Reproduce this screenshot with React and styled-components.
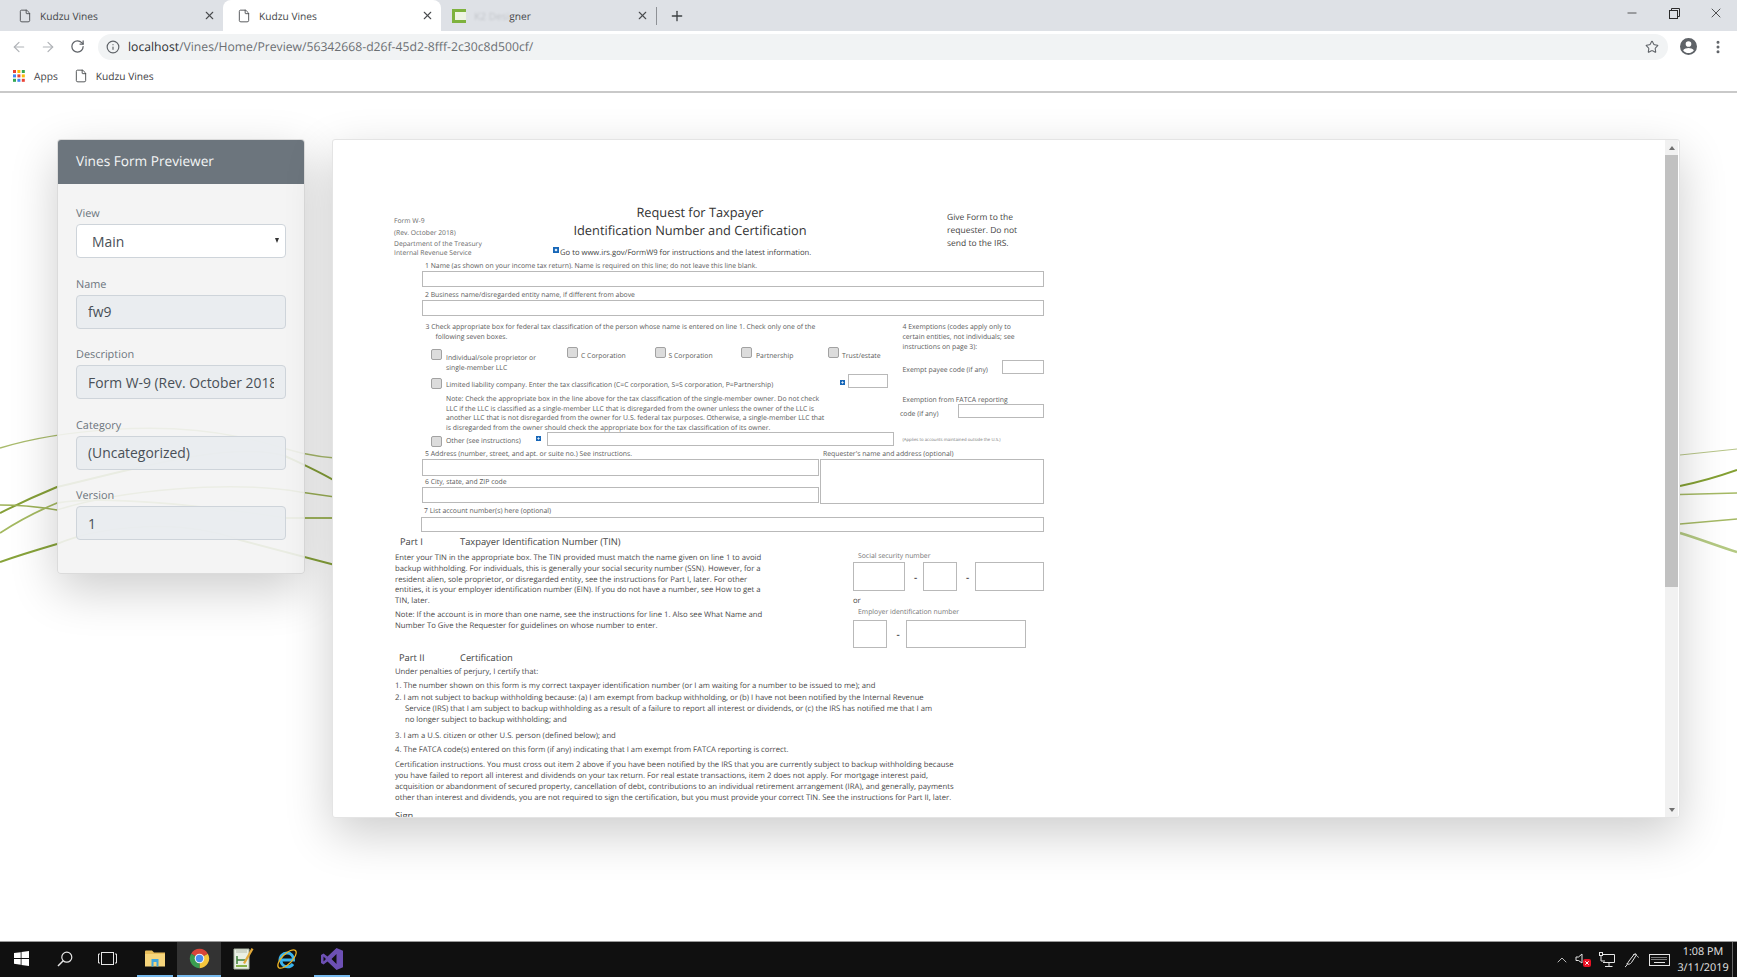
import React from "react";
import styled, { createGlobalStyle } from "styled-components";
import {
  ArrowLeft,
  ArrowRight,
  ChevronUp,
  EllipsisVertical,
  File,
  Info,
  Minus,
  Plus,
  RotateCw,
  Star,
  X,
} from "lucide-react";

const GlobalStyle = createGlobalStyle`
  html, body {
    margin: 0;
    padding: 0;
    height: 100%;
    overflow: hidden;
    background: #fff;
    font-family: "Open Sans", "Liberation Sans", sans-serif;
    text-rendering: geometricPrecision;
  }
  * { box-sizing: border-box; }
`;

const Screen = styled.div`
  width: 1737px;
  height: 977px;
  display: flex;
  flex-direction: column;
  overflow: hidden;
`;

/* browser chrome */
const TabStrip = styled.div`
  height: 31px;
  background: #dee1e6;
  display: flex;
  align-items: stretch;
`;

const Tab = styled.div`
  width: ${(p) => p.$width}px;
  display: flex;
  align-items: center;
  padding-left: ${(p) => p.$pad}px;
  gap: 8px;
  color: #45474a;
  font-size: 10.2px;
  background: ${(p) => (p.$active ? "#fff" : "transparent")};
  border-radius: 8px 8px 0 0;
`;

const TabTitle = styled.span`
  flex: 1;
`;

const TabClose = styled(X)`
  margin-right: 7px;
  color: #4a4c4f;
`;

const Smudged = styled.span`
  opacity: 0.18;
  filter: blur(1px);
`;

const FaviconK2 = styled.span`
  width: 14px;
  height: 14px;
  margin-left: 1px;
  border: 3px solid #7eb23d;
  border-right: 0;
  background: #eef4e4;
`;

const TabDivider = styled.span`
  width: 1px;
  height: 18px;
  align-self: center;
  background: #8e9196;
`;

const NewTab = styled.button`
  width: 40px;
  border: 0;
  padding: 0;
  background: none;
  display: flex;
  align-items: center;
  justify-content: center;
  color: #3c4043;
`;

const WindowControls = styled.div`
  margin-left: auto;
  display: flex;
  align-items: center;
  color: #2b2b2b;
  padding-bottom: 5px;
`;

const WindowButton = styled.span`
  width: 42px;
  display: flex;
  justify-content: center;
`;

const Toolbar = styled.div`
  height: 31px;
  display: flex;
  align-items: center;
  padding: 0 11px 0 4px;
  color: #5f6368;
`;

const NavButton = styled.span`
  width: 29.5px;
  display: flex;
  justify-content: center;
  color: ${(p) => (p.$off ? "#b0b3b7" : "#5f6368")};
`;

const AddressBar = styled.div`
  width: 1570px;
  height: 26px;
  margin-left: 5.5px;
  border-radius: 13px;
  background: #f1f3f4;
  display: flex;
  align-items: center;
  padding: 0 9px 0 8px;
`;

const Url = styled.span`
  margin-left: 8px;
  flex: 1;
  font-size: 12.2px;
  color: #6b6f73;
`;

const UrlHost = styled.span`
  color: #2f3235;
`;

const ToolbarIcons = styled.div`
  display: flex;
  align-items: center;
  margin-left: 12px;
  gap: 13px;
`;

const BookmarkBar = styled.div`
  height: 31px;
  display: flex;
  align-items: center;
  border-bottom: 2px solid #c9c9c9;
  padding: 0 0 1px 13px;
  font-size: 10.2px;
  color: #3f4245;
`;

const Bookmark = styled.span`
  display: flex;
  align-items: center;
  gap: ${(p) => p.$gap}px;
  margin-right: ${(p) => p.$after || 15}px;
`;

/* page */
const Main = styled.main`
  position: relative;
  flex: 1;
  display: flex;
  align-items: flex-start;
  gap: 27px;
  padding: 46px 0 0 57px;
  background: #fff;
  overflow: hidden;
`;

const Vines = styled.svg`
  position: absolute;
  left: 0;
  top: 0;
  width: 1737px;
  height: 848px;
`;

const Card = styled.section`
  position: relative;
  width: 248px;
  height: 435px;
  border: 1px solid rgba(0, 0, 0, 0.1);
  border-radius: 4px;
  background: rgba(243, 243, 243, 0.91);
  box-shadow: 0 16px 48px rgba(0, 0, 0, 0.2);
  overflow: hidden;
`;

const CardHeader = styled.h2`
  margin: 0;
  height: 44px;
  display: flex;
  align-items: center;
  padding: 0 0 1px 18px;
  background: #6c757d;
  color: #f4f5f6;
  font-size: 13.66px;
  font-weight: 400;
`;

const CardBody = styled.div`
  padding: 21px 18px 0 18px;
  display: flex;
  flex-direction: column;
  gap: 17.5px;
`;

const Field = styled.label`
  display: block;
`;

const FieldName = styled.span`
  display: block;
  height: 19px;
  line-height: 18px;
  color: #6c757d;
  font-size: 10.9px;
`;

const SelectWrap = styled.div`
  position: relative;
`;

const Select = styled.select`
  display: block;
  width: 100%;
  height: 34px;
  appearance: none;
  border: 1px solid #ced4da;
  border-radius: 4px;
  background: #fff;
  color: #495057;
  font: 400 13.9px "Open Sans", sans-serif;
  padding: 0 0 0 15px;
`;

const SelectArrow = styled.span`
  position: absolute;
  right: 7px;
  top: 14px;
  width: 0;
  height: 0;
  border-left: 2.5px solid transparent;
  border-right: 2.5px solid transparent;
  border-top: 5px solid #333;
`;

const TextInput = styled.input`
  display: block;
  width: 100%;
  height: 34px;
  border: 1px solid #ced4da;
  border-radius: 4px;
  background: rgba(233, 236, 239, 0.9);
  color: #495057;
  font: 400 13.9px "Open Sans", sans-serif;
  padding: 0 11px;
`;

const Frame = styled.section`
  position: relative;
  width: 1348px;
  height: 679px;
  display: flex;
  border: 1px solid #e4e4e4;
  border-radius: 3px;
  background: #fff;
  box-shadow: 0 16px 48px rgba(0, 0, 0, 0.2);
  overflow: hidden;
`;

const Sheet = styled.div`
  flex: 1;
  height: 100%;
  overflow: hidden;
  padding: 63px 0 0 61px;
`;

const Scrollbar = styled.div`
  width: 13px;
  margin-right: 1px;
  background: #f1f1f1;
  display: flex;
  flex-direction: column;
  align-items: center;
`;

const ScrollArrow = styled.span`
  height: 15px;
  display: flex;
  align-items: center;
  &::before {
    content: "";
    border-left: 3px solid transparent;
    border-right: 3px solid transparent;
    ${(p) => (p.$down ? "border-top" : "border-bottom")}: 4px solid #707070;
  }
`;

const ScrollThumb = styled.span`
  width: 100%;
  height: 432px;
  background: #c1c1c1;
`;

const ScrollTrack = styled.span`
  flex: 1;
`;

/* the W-9 */
const Form = styled.div`
  width: 650px;
  color: #5a5a5a;
  font-size: 6.85px;
`;

const Header = styled.header`
  display: flex;
  height: 56px;
`;

const HeaderLeft = styled.div`
  width: 106px;
  padding-top: 12px;
  font-size: 6.75px;
  color: #6a6a6a;
`;

const HeaderLine = styled.div`
  line-height: ${(p) => p.$h}px;
`;

const HeaderCenter = styled.div`
  width: 400px;
  text-align: center;
  color: #333;
`;

const Title = styled.h1`
  margin: 0;
  padding-right: ${(p) => p.$shift || 0}px;
  font-size: 12.8px;
  font-weight: 400;
  line-height: 18px;
`;

const GoTo = styled.div`
  margin-top: 8px;
  display: flex;
  padding-left: 53px;
  font-size: 7.67px;
  line-height: 12px;
  color: #444;
`;

const BlueMark = styled.span`
  flex: none;
  width: ${(p) => p.$size || 5}px;
  height: ${(p) => p.$size || 5}px;
  margin-top: ${(p) => p.$top || 0}px;
  margin-right: ${(p) => p.$gap || 0}px;
  background: radial-gradient(circle, #dceaf8 0 22%, #1867b8 40%);
`;

const HeaderRight = styled.div`
  margin-left: 47px;
  padding-top: 8px;
  font-size: 8.5px;
  line-height: 13px;
  color: #444;
`;

const Lines = styled.div`
  padding-left: 28px;
`;

const LineLabel = styled.div`
  height: ${(p) => p.$h || 12}px;
  margin-top: ${(p) => p.$top || 0}px;
  line-height: ${(p) => (p.$h || 12) + 3}px;
  padding-left: ${(p) => p.$pad ?? 3}px;
  white-space: nowrap;
`;

const Box = styled.div`
  width: ${(p) => (p.$w ? `${p.$w}px` : "100%")};
  height: ${(p) => p.$h}px;
  margin-left: ${(p) => p.$shift || 0}px;
  flex: none;
  border: 1px solid #b9b9b9;
  background: #fff;
`;

const Classification = styled.div`
  display: flex;
  margin-left: -28px;
  padding-left: 31.5px;
  padding-top: 7px;
  height: 131px;
`;

const ClassLeft = styled.div`
  width: 477px;
`;

const WrapText = styled.div`
  line-height: ${(p) => p.$lh || 10}px;
  padding-left: ${(p) => p.$pad || 0}px;
  margin-top: ${(p) => p.$top || 0}px;
  white-space: nowrap;
`;

const Hanging = styled.div`
  padding-left: 10px;
  margin-top: -0.5px;
`;

const TaxTypes = styled.div`
  display: flex;
  height: 27px;
  margin-top: 2.5px;
  padding-left: 5.5px;
`;

const TaxType = styled.div`
  width: ${(p) => p.$w}px;
  display: flex;
  gap: ${(p) => p.$gap || 3}px;
  line-height: 9.5px;
`;

const Check = styled.span`
  flex: none;
  width: 11px;
  height: 11px;
  margin-top: ${(p) => p.$top || 0}px;
  border: 1px solid #a2a2a2;
  border-radius: 2px;
  background: #dcdcdc;
`;

const CheckText = styled.span`
  padding-top: ${(p) => p.$top || 0}px;
  line-height: ${(p) => p.$lh || 10}px;
  white-space: nowrap;
`;

const LlcRow = styled.div`
  display: flex;
  height: 15px;
  margin-top: 2px;
  padding-left: 5.5px;
`;

const RowText = styled(CheckText)`
  width: ${(p) => p.$w}px;
  margin-left: 4px;
`;

const Note = styled.div`
  margin-top: 6px;
  padding-left: 20.5px;
  line-height: 9.65px;
  white-space: nowrap;
`;

const OtherRow = styled(LlcRow)`
  margin-top: -2px;
`;

const ClassRight = styled.div`
  width: 141px;
  flex: none;
`;

const ExemptRow = styled.div`
  display: flex;
  justify-content: space-between;
  height: 14px;
  margin-top: 6.5px;
  line-height: 22px;
`;

const FatcaRow = styled.div`
  display: flex;
  justify-content: space-between;
  height: 14px;
  margin: -2px 0 0 -2.5px;
  line-height: 22px;
`;

const Tiny = styled.div`
  margin-top: 17px;
  font-size: 4.3px;
  line-height: 10px;
  color: #777;
  white-space: nowrap;
`;

const AddressRow = styled.div`
  display: flex;
  gap: 1px;
`;

const AddressLeft = styled.div`
  width: 397px;
`;

const AddressRight = styled.div`
  flex: 1;
`;

const PartHeading = styled.div`
  display: flex;
  height: 16px;
  margin-top: ${(p) => p.$top}px;
  padding-left: ${(p) => p.$pad}px;
  line-height: 16px;
  font-size: 9.33px;
  color: #444;
`;

const PartNumber = styled.span`
  width: ${(p) => p.$w}px;
`;

const TinSection = styled.div`
  display: flex;
  height: 99px;
  padding-left: 1px;
`;

const TinText = styled.div`
  width: 458px;
  padding-top: 3px;
  font-size: 7.72px;
  line-height: 10.75px;
  color: #4a4a4a;
  white-space: nowrap;
`;

const TinNote = styled.div`
  margin-top: 3px;
`;

const TinBoxes = styled.div`
  flex: 1;
  width: 190px;
`;

const TinLabel = styled.div`
  height: 10px;
  line-height: ${(p) => p.$lh}px;
  padding-left: 5px;
  color: #777;
`;

const DigitRow = styled.div`
  display: flex;
  align-items: center;
  margin-top: ${(p) => p.$top}px;
`;

const Dash = styled.span`
  width: ${(p) => p.$w}px;
  padding-left: 3px;
  text-align: center;
  font-size: 10px;
  font-weight: 600;
  color: #444;
`;

const Or = styled.div`
  margin-top: 5px;
  height: 11px;
  line-height: 10px;
  font-size: 7.7px;
  color: #444;
`;

const Cert = styled.div`
  padding-left: 1px;
  font-size: 7.71px;
  color: #4a4a4a;
  white-space: nowrap;
`;

const CertLine = styled.div`
  line-height: ${(p) => p.$lh || 12}px;
  margin-top: ${(p) => p.$top || 0}px;
  padding-left: ${(p) => p.$pad || 0}px;
`;

const SignRow = styled.div`
  display: flex;
  margin-top: 5px;
  line-height: 14px;
  font-size: 9.33px;
  color: #444;
`;

const SignLabel = styled.span`
  width: 50px;
`;

const SignHint = styled.span`
  font-size: 5px;
  padding-top: 7px;
`;

/* taskbar */
const Taskbar = styled.footer`
  height: 36px;
  flex: none;
  background: #101010;
  border-top: 1px solid #9a9a9a;
  display: flex;
  align-items: stretch;
  color: #e6e6e6;
`;

const TaskSlot = styled.div`
  width: ${(p) => p.$w || 43}px;
  margin-left: ${(p) => p.$left || 0}px;
  display: flex;
  align-items: center;
  justify-content: center;
  background: ${(p) => (p.$active ? "#333" : "transparent")};
  border-bottom: 2px solid ${(p) => (p.$open ? "#76b9ed" : "transparent")};
`;

const Tray = styled.div`
  margin-left: auto;
  display: flex;
  align-items: center;
`;

const TraySlot = styled.span`
  width: ${(p) => p.$w}px;
  display: flex;
  justify-content: center;
`;

const Clock = styled.div`
  width: 58px;
  text-align: center;
  font-size: 10.8px;
  line-height: 16px;
  color: #e6e6e6;
`;

const DesktopPeek = styled.span`
  width: 5px;
  border-left: 1px solid #666;
  align-self: stretch;
`;

const AppsGrid = () => (
  <svg width="12" height="12" viewBox="0 0 12 12">
    {[
      "#ea4335", "#fbbc05", "#34a853",
      "#4285f4", "#ea4335", "#fbbc05",
      "#34a853", "#4285f4", "#ea4335",
    ].map((fill, i) => (
      <rect key={i} x={(i % 3) * 4.4} y={Math.floor(i / 3) * 4.4} width="3" height="3" fill={fill} />
    ))}
  </svg>
);

const ProfileIcon = () => (
  <svg width="17" height="17" viewBox="0 0 24 24" fill="#5f6368">
    <path d="M12 0a12 12 0 1 0 0 24 12 12 0 0 0 0-24zm0 4.5a4 4 0 1 1 0 8 4 4 0 0 1 0-8zm0 16.8c-3.2 0-6-1.6-7.6-4.1 1.4-2 5-3 7.6-3s6.200 1 7.600 3c-1.600 2.500-4.400 4.100-7.600 4.100z" />
  </svg>
);

const RestoreIcon = () => (
  <svg width="11" height="11" viewBox="0 0 11 11" fill="none" stroke="#2b2b2b">
    <rect x="0.5" y="2.500" width="8" height="8" />
    <path d="M2.500 2.500V0.500H10.500V8.500H8.500" />
  </svg>
);

const WindowsLogo = () => (
  <svg width="15" height="15" viewBox="0 0 15 15" fill="#fff">
    <path d="M0 2.100 6.700 1.200V7H0zM7.500 1.100 15 0V7H7.500zM0 7.900H6.700V13.700L0 12.800zM7.500 7.900H15V15L7.500 13.900z" />
  </svg>
);

const SearchIcon = () => (
  <svg width="16" height="16" viewBox="0 0 16 16" fill="none" stroke="#e6e6e6" strokeWidth="1.200">
    <circle cx="9.800" cy="6.200" r="5" />
    <path d="M6.200 9.800 1 15" strokeWidth="1.500" />
  </svg>
);

const TaskViewIcon = () => (
  <svg width="19" height="13" viewBox="0 0 19 13" fill="none" stroke="#e6e6e6">
    <rect x="3.500" y="0.500" width="12" height="12" />
    <path d="M2 2H0.500V11H2M17 2H18.500V11H17" />
  </svg>
);

const FolderIcon = () => (
  <svg width="20" height="17" viewBox="0 0 20 17">
    <path d="M0 1.500Q0 .5 1 .5H7L9 2.500H20V16H0z" fill="#e8bd5a" />
    <path d="M0 4H20V16.500H0z" fill="#f6d57c" />
    <path d="M6.500 9H13.500V16.500H11.500V12H8.500V16.500H6.500z" fill="#3fa7e0" />
  </svg>
);

const ChromeIcon = () => (
  <svg width="21" height="21" viewBox="0 0 24 24">
    <path d="M12 12 2.470 6.500A11 11 0 0 1 21.530 6.500z" fill="#d9453a" />
    <path d="M12 12 21.530 6.500A11 11 0 0 1 12 23z" fill="#f5c63c" />
    <path d="M12 12V23A11 11 0 0 1 2.470 6.500z" fill="#3a9d50" />
    <circle cx="12" cy="12" r="5.500" fill="#f3f3f3" />
    <circle cx="12" cy="12" r="4.200" fill="#4b8bf0" />
  </svg>
);

const NotepadIcon = () => (
  <svg width="21" height="23" viewBox="0 0 21 23">
    <path d="M1 2H16V22H1z" fill="#e9efe4" stroke="#a9b3a2" />
    <path d="M3 3H14V6H3z" fill="#cfd6c9" />
    <path d="M4 9V17M4 13H12" stroke="#3f7f3a" strokeWidth="1.500" />
    <path d="M3 18H14V20H3z" fill="#86b24a" />
    <path d="M10 16 18.500 1 20.500 2.200 12 17z" fill="#e2a93a" />
  </svg>
);

const IeIcon = () => (
  <svg width="22" height="22" viewBox="0 0 22 22" fill="none">
    <path d="M4 13.500C3.500 8 7 5 11 5c4 0 6.500 3 6.500 7H5M17 16c-1.500 2-3.500 2.800-5.500 2.800-3.500 0-6-2.500-6.500-5.300" stroke="#39b4ef" strokeWidth="3" />
    <ellipse cx="11" cy="11" rx="12" ry="5" transform="rotate(-45 11 11)" stroke="#eeb422" strokeWidth="1.200" />
  </svg>
);

const VsIcon = () => (
  <svg width="22" height="22" viewBox="0 0 22 22">
    <path
      fillRule="evenodd"
      d="M15.500 0 22 2.800V19.200L15.500 22 6.500 13.500 2.500 16.500 0 15V7L2.500 5.500 6.500 8.500zM15.500 6 10.500 11 15.500 16zM2.500 8.500V13.500L5 11z"
      fill="#6d50b4"
    />
  </svg>
);

const SpeakerIcon = () => (
  <svg width="17" height="15" viewBox="0 0 17 15">
    <path d="M1 5H3.500L7 2V11L3.500 8.500H1z" fill="none" stroke="#e6e6e6" />
    <rect x="8" y="7" width="8" height="8" rx="2" fill="#e81123" />
    <path d="M10.300 9.300 13.700 12.700M13.700 9.300 10.300 12.700" stroke="#fff" />
  </svg>
);

const NetworkIcon = () => (
  <svg width="16" height="15" viewBox="0 0 16 15" fill="none" stroke="#e6e6e6">
    <path d="M4 2.500H15.500V10.500H4M10 10.500V14M6 14.500H13.500" />
    <rect x="0.500" y="0.500" width="3" height="3" />
    <path d="M2 3.500V9H6" />
  </svg>
);

const PenIcon = () => (
  <svg width="16" height="16" viewBox="0 0 16 16" fill="none" stroke="#e6e6e6">
    <path d="M1 15C3 14 3.500 11 5 9L10 2.500C11 1 13 2 12 3.500L7.500 10.500C6 12.500 3 13 3 11M9 3C11 1.500 12.500 3 14.500 5.500" />
  </svg>
);

const KeyboardIcon = () => (
  <svg width="21" height="12" viewBox="0 0 21 12" fill="none" stroke="#e6e6e6">
    <rect x="0.500" y="0.500" width="20" height="11" />
    <path d="M2.500 3.500H18.500M2.500 5.500H18.500" strokeDasharray="1 1" />
    <path d="M5 8.500H16" />
  </svg>
);

const Doc = () => (
  <Form>
    <Header>
      <HeaderLeft>
        <HeaderLine $h={12}>Form W-9</HeaderLine>
        <HeaderLine $h={11.500}>(Rev. October 2018)</HeaderLine>
        <HeaderLine $h={9.500}>Department of the Treasury</HeaderLine>
        <HeaderLine $h={9.500}>Internal Revenue Service</HeaderLine>
      </HeaderLeft>
      <HeaderCenter>
        <Title>Request for Taxpayer</Title>
        <Title $shift={20}>Identification Number and Certification</Title>
        <GoTo>
          <BlueMark $size={6} $gap={1} />
          Go to www.irs.gov/FormW9 for instructions and the latest information.
        </GoTo>
      </HeaderCenter>
      <HeaderRight>
        Give Form to the
        <br />
        requester. Do not
        <br />
        send to the IRS.
      </HeaderRight>
    </Header>

    <Lines>
      <LineLabel>1 Name (as shown on your income tax return). Name is required on this line; do not leave this line blank.</LineLabel>
      <Box $w={621.500} $h={16} />
      <LineLabel $top={1}>2 Business name/disregarded entity name, if different from above</LineLabel>
      <Box $w={621.500} $h={16} />

      <Classification>
        <ClassLeft>
          <WrapText>3 Check appropriate box for federal tax classification of the person whose name is entered on line 1. Check only one of the</WrapText>
          <Hanging>
            <WrapText>following seven boxes.</WrapText>
          </Hanging>
          <TaxTypes>
            <TaxType $w={136} $gap={4}>
              <Check $top={4} />
              <CheckText $top={9} $lh={9.500}>
                Individual/sole proprietor or
                <br />
                single-member LLC
              </CheckText>
            </TaxType>
            <TaxType $w={87.500}>
              <Check $top={2} />
              <CheckText $top={7}>C Corporation</CheckText>
            </TaxType>
            <TaxType $w={86.500}>
              <Check $top={2} />
              <CheckText $top={7}>S Corporation</CheckText>
            </TaxType>
            <TaxType $w={87} $gap={4}>
              <Check $top={2} />
              <CheckText $top={7}>Partnership</CheckText>
            </TaxType>
            <TaxType $w={60}>
              <Check $top={2} />
              <CheckText $top={7}>Trust/estate</CheckText>
            </TaxType>
          </TaxTypes>
          <LlcRow>
            <Check $top={4} />
            <RowText $w={394} $top={7}>
              Limited liability company. Enter the tax classification (C=C corporation, S=S corporation, P=Partnership)
            </RowText>
            <BlueMark $top={5.500} $gap={3} />
            <Box $w={39.500} $h={14} />
          </LlcRow>
          <Note>
            Note: Check the appropriate box in the line above for the tax classification of the single-member owner. Do not check
            <br />
            LLC if the LLC is classified as a single-member LLC that is disregarded from the owner unless the owner of the LLC is
            <br />
            another LLC that is not disregarded from the owner for U.S. federal tax purposes. Otherwise, a single-member LLC that
            <br />
            is disregarded from the owner should check the appropriate box for the tax classification of its owner.
          </Note>
          <OtherRow>
            <Check $top={4} />
            <RowText $w={90} $top={5}>Other (see instructions)</RowText>
            <BlueMark $top={4.500} $gap={6} />
            <Box $w={347} $h={14} />
          </OtherRow>
        </ClassLeft>
        <ClassRight>
          <WrapText>4 Exemptions (codes apply only to</WrapText>
          <WrapText>certain entities, not individuals; see</WrapText>
          <WrapText>instructions on page 3):</WrapText>
          <ExemptRow>
            <span>Exempt payee code (if any)</span>
            <Box $w={41.500} $h={14} />
          </ExemptRow>
          <WrapText $lh={11} $top={21}>Exemption from FATCA reporting</WrapText>
          <FatcaRow>
            <span>code (if any)</span>
            <Box $w={86} $h={14} />
          </FatcaRow>
          <Tiny>(Applies to accounts maintained outside the U.S.)</Tiny>
        </ClassRight>
      </Classification>

      <AddressRow>
        <AddressLeft>
          <LineLabel>5 Address (number, street, and apt. or suite no.) See instructions.</LineLabel>
          <Box $h={17} />
          <LineLabel $h={11}>6 City, state, and ZIP code</LineLabel>
          <Box $h={16} />
        </AddressLeft>
        <AddressRight>
          <LineLabel>Requester&apos;s name and address (optional)</LineLabel>
          <Box $w={223.500} $h={45} />
        </AddressRight>
      </AddressRow>
      <LineLabel $h={13} $pad={2}>7 List account number(s) here (optional)</LineLabel>
      <Box $w={622.500} $h={15} $shift={-1} />
    </Lines>

    <PartHeading $pad={6} $top={2}>
      <PartNumber $w={60}>Part I</PartNumber>
      Taxpayer Identification Number (TIN)
    </PartHeading>
    <TinSection>
      <TinText>
        Enter your TIN in the appropriate box. The TIN provided must match the name given on line 1 to avoid
        <br />
        backup withholding. For individuals, this is generally your social security number (SSN). However, for a
        <br />
        resident alien, sole proprietor, or disregarded entity, see the instructions for Part I, later. For other
        <br />
        entities, it is your employer identification number (EIN). If you do not have a number, see How to get a
        <br />
        TIN, later.
        <TinNote>
          Note: If the account is in more than one name, see the instructions for line 1. Also see What Name and
          <br />
          Number To Give the Requester for guidelines on whose number to enter.
        </TinNote>
      </TinText>
      <TinBoxes>
        <TinLabel $lh={14}>Social security number</TinLabel>
        <DigitRow $top={2}>
          <Box $w={52} $h={29} />
          <Dash $w={18}>-</Dash>
          <Box $w={34} $h={29} />
          <Dash $w={18}>-</Dash>
          <Box $w={68.500} $h={29} />
        </DigitRow>
        <Or>or</Or>
        <TinLabel $lh={12}>Employer identification number</TinLabel>
        <DigitRow $top={3}>
          <Box $w={34} $h={28} />
          <Dash $w={19}>-</Dash>
          <Box $w={120} $h={28} />
        </DigitRow>
      </TinBoxes>
    </TinSection>

    <PartHeading $pad={5} $top={1}>
      <PartNumber $w={61}>Part II</PartNumber>
      Certification
    </PartHeading>
    <Cert>
      <CertLine>Under penalties of perjury, I certify that:</CertLine>
      <CertLine $top={2}>1. The number shown on this form is my correct taxpayer identification number (or I am waiting for a number to be issued to me); and</CertLine>
      <CertLine $lh={11} $top={1}>2. I am not subject to backup withholding because: (a) I am exempt from backup withholding, or (b) I have not been notified by the Internal Revenue</CertLine>
      <CertLine $lh={11} $pad={10}>Service (IRS) that I am subject to backup withholding as a result of a failure to report all interest or dividends, or (c) the IRS has notified me that I am</CertLine>
      <CertLine $lh={11} $pad={10}>no longer subject to backup withholding; and</CertLine>
      <CertLine $top={4}>3. I am a U.S. citizen or other U.S. person (defined below); and</CertLine>
      <CertLine $top={2}>4. The FATCA code(s) entered on this form (if any) indicating that I am exempt from FATCA reporting is correct.</CertLine>
      <CertLine $lh={11} $top={4}>Certification instructions. You must cross out item 2 above if you have been notified by the IRS that you are currently subject to backup withholding because</CertLine>
      <CertLine $lh={11}>you have failed to report all interest and dividends on your tax return. For real estate transactions, item 2 does not apply. For mortgage interest paid,</CertLine>
      <CertLine $lh={11}>acquisition or abandonment of secured property, cancellation of debt, contributions to an individual retirement arrangement (IRA), and generally, payments</CertLine>
      <CertLine $lh={11}>other than interest and dividends, you are not required to sign the certification, but you must provide your correct TIN. See the instructions for Part II, later.</CertLine>
      <SignRow>
        <SignLabel>Sign</SignLabel>
        <SignHint>Signature of</SignHint>
      </SignRow>
    </Cert>
  </Form>
);

export default function App() {
  return (
    <Screen>
      <GlobalStyle />
      <TabStrip>
        <Tab $width={223} $pad={18}>
          <File size={14} strokeWidth={1.500} />
          <TabTitle>Kudzu Vines</TabTitle>
          <TabClose size={13} />
        </Tab>
        <Tab $width={218} $pad={14} $active>
          <File size={14} strokeWidth={1.500} />
          <TabTitle>Kudzu Vines</TabTitle>
          <TabClose size={13} />
        </Tab>
        <Tab $width={215} $pad={10}>
          <FaviconK2 />
          <TabTitle>
            <Smudged>K2 Desi</Smudged>gner
          </TabTitle>
          <TabClose size={13} />
        </Tab>
        <TabDivider />
        <NewTab aria-label="New tab">
          <Plus size={16} strokeWidth={2} />
        </NewTab>
        <WindowControls>
          <WindowButton><Minus size={14} strokeWidth={1.300} /></WindowButton>
          <WindowButton><RestoreIcon /></WindowButton>
          <WindowButton><X size={16} strokeWidth={1.200} /></WindowButton>
        </WindowControls>
      </TabStrip>

      <Toolbar>
        <NavButton $off><ArrowLeft size={16} strokeWidth={1.800} /></NavButton>
        <NavButton $off><ArrowRight size={16} strokeWidth={1.800} /></NavButton>
        <NavButton><RotateCw size={15} strokeWidth={2} /></NavButton>
        <AddressBar>
          <Info size={14} strokeWidth={2} />
          <Url>
            <UrlHost>localhost</UrlHost>/Vines/Home/Preview/56342668-d26f-45d2-8fff-2c30c8d500cf/
          </Url>
          <Star size={14} strokeWidth={1.800} />
        </AddressBar>
        <ToolbarIcons>
          <ProfileIcon />
          <EllipsisVertical size={16} strokeWidth={2.500} />
        </ToolbarIcons>
      </Toolbar>

      <BookmarkBar>
        <Bookmark $gap={9} $after={16}><AppsGrid />Apps</Bookmark>
        <Bookmark $gap={8}><File size={14} strokeWidth={1.500} />Kudzu Vines</Bookmark>
      </BookmarkBar>

      <Main>
        <Vines viewBox="0 93 1737 848" fill="none" aria-hidden="true">
          <path d="M0 448C60 430 160 420 240 437C280 445 300 456 335 458" stroke="#a9bb6c" strokeWidth="1.500" />
          <path d="M0 513C20 503 40 494 57 487C130 470 230 440 285 456C300 463 318 471 335 481" stroke="#86a038" strokeWidth="2" />
          <path d="M0 505C20 505 40 507 57 510C120 490 230 480 300 492L335 497" stroke="#9db257" strokeWidth="1.500" />
          <path d="M0 533C20 520 40 510 57 503C100 495 200 505 287 518H335" stroke="#a4b960" strokeWidth="1.800" />
          <path d="M0 562C20 555 40 549 57 544C90 530 170 515 240 540L335 565" stroke="#87a33a" strokeWidth="2" />
          <path d="M1680 455L1737 449" stroke="#b7c588" strokeWidth="1.200" />
          <path d="M1680 486C1700 482 1720 476 1737 470" stroke="#84a033" strokeWidth="2" />
          <path d="M1680 494.500L1737 493" stroke="#a5b964" strokeWidth="1.500" />
          <path d="M1680 524L1737 519" stroke="#a5b964" strokeWidth="1.300" />
          <path d="M1680 533C1700 539 1720 547 1737 552" stroke="#b4c982" strokeWidth="2.500" />
        </Vines>
        <Card>
          <CardHeader>Vines Form Previewer</CardHeader>
          <CardBody>
            <Field>
              <FieldName>View</FieldName>
              <SelectWrap>
                <Select defaultValue="Main">
                  <option>Main</option>
                </Select>
                <SelectArrow />
              </SelectWrap>
            </Field>
            <Field>
              <FieldName>Name</FieldName>
              <TextInput disabled value="fw9" readOnly />
            </Field>
            <Field>
              <FieldName>Description</FieldName>
              <TextInput disabled value="Form W-9 (Rev. October 2018)" readOnly />
            </Field>
            <Field>
              <FieldName>Category</FieldName>
              <TextInput disabled value="(Uncategorized)" readOnly />
            </Field>
            <Field>
              <FieldName>Version</FieldName>
              <TextInput disabled value="1" readOnly />
            </Field>
          </CardBody>
        </Card>
        <Frame>
          <Sheet>
            <Doc />
          </Sheet>
          <Scrollbar>
            <ScrollArrow />
            <ScrollThumb />
            <ScrollTrack />
            <ScrollArrow $down />
          </Scrollbar>
        </Frame>
      </Main>

      <Taskbar>
        <TaskSlot><WindowsLogo /></TaskSlot>
        <TaskSlot><SearchIcon /></TaskSlot>
        <TaskSlot><TaskViewIcon /></TaskSlot>
        <TaskSlot $w={36} $left={8} $open><FolderIcon /></TaskSlot>
        <TaskSlot $w={44} $left={4} $active $open><ChromeIcon /></TaskSlot>
        <TaskSlot $w={44}><NotepadIcon /></TaskSlot>
        <TaskSlot $w={44}><IeIcon /></TaskSlot>
        <TaskSlot $w={36} $left={5} $open><VsIcon /></TaskSlot>
        <Tray>
          <TraySlot $w={20}><ChevronUp size={16} strokeWidth={1.200} /></TraySlot>
          <TraySlot $w={22}><SpeakerIcon /></TraySlot>
          <TraySlot $w={25}><NetworkIcon /></TraySlot>
          <TraySlot $w={25}><PenIcon /></TraySlot>
          <TraySlot $w={30}><KeyboardIcon /></TraySlot>
          <Clock>
            1:08 PM
            <br />
            3/11/2019
          </Clock>
          <DesktopPeek />
        </Tray>
      </Taskbar>
    </Screen>
  );
}
